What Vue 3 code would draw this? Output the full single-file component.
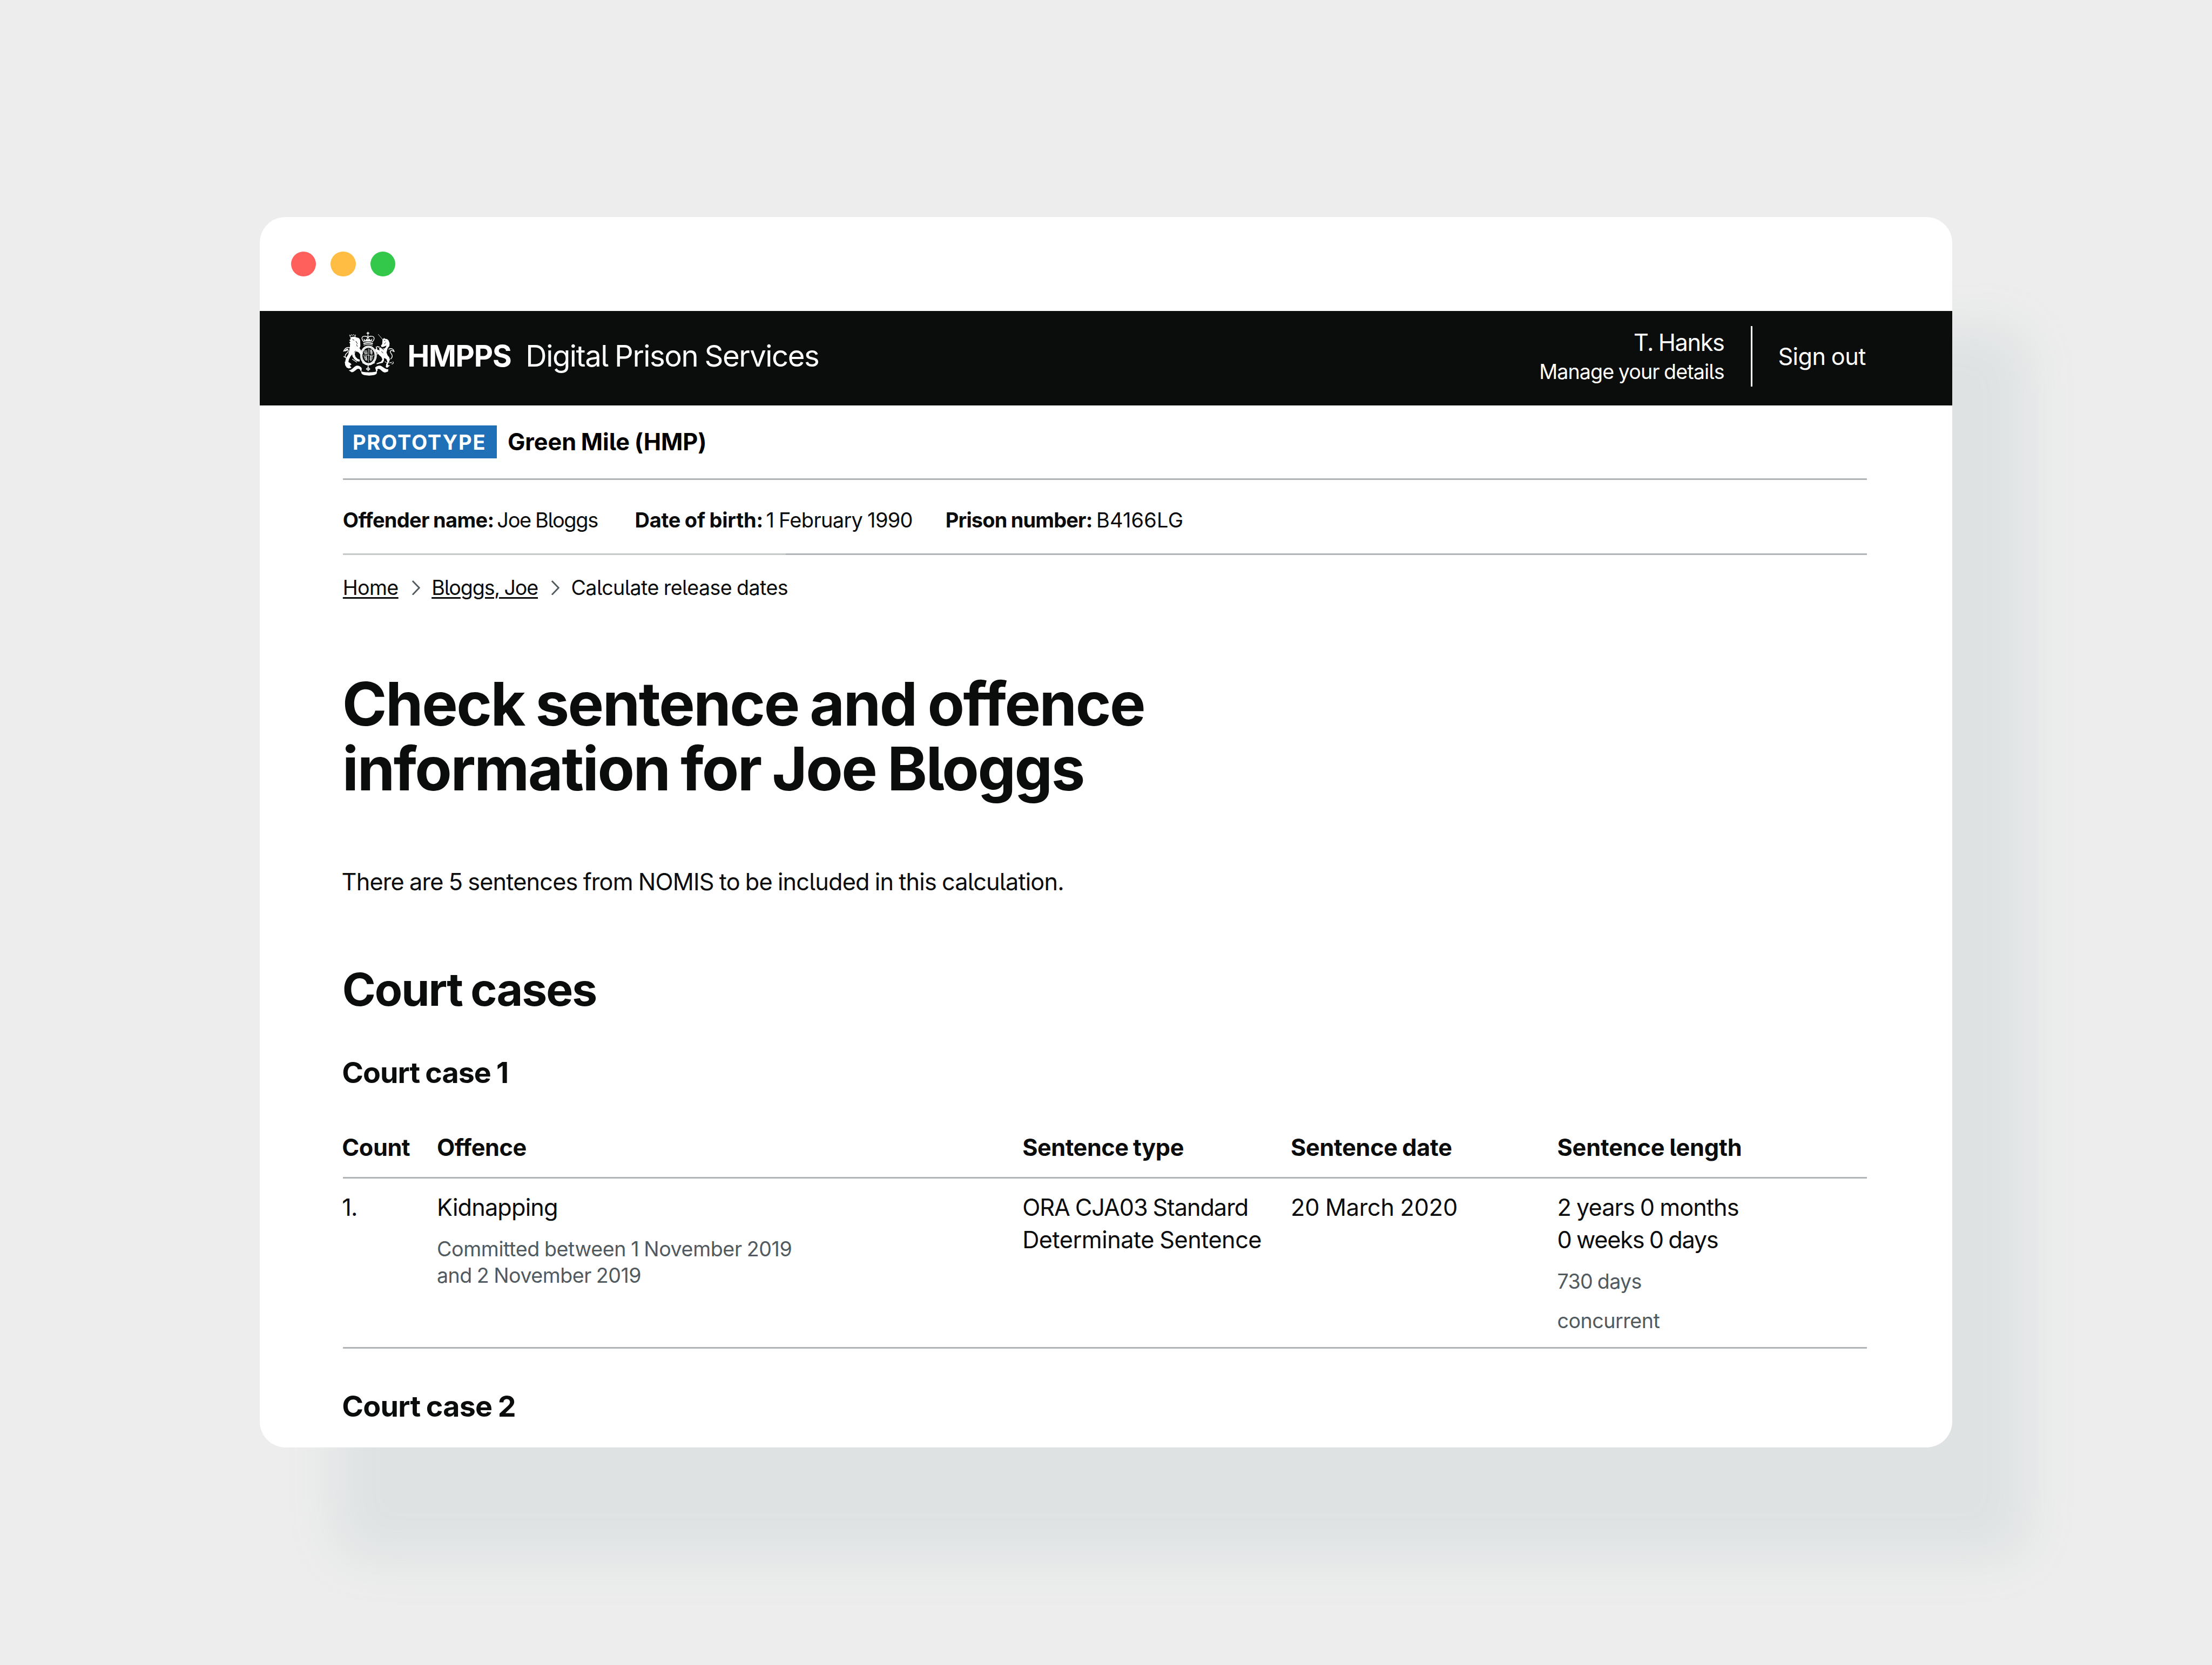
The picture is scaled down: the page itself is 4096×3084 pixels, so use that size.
<script setup>
const columns = [
  { label: 'Count', cls: 'th-count' },
  { label: 'Offence', cls: 'th-offence' },
  { label: 'Sentence type', cls: 'th-type' },
  { label: 'Sentence date', cls: 'th-date' },
  { label: 'Sentence length', cls: 'th-length' },
]
</script>

<template>
  <div class="stage">
    <div class="window">
      <div class="titlebar">
        <span class="light red"></span>
        <span class="light amber"></span>
        <span class="light green"></span>
      </div>

      <header class="header">
        <svg class="crest" viewBox="75 70 310 265" fill="none" stroke-linecap="round" stroke-linejoin="round">
          <!-- crown -->
          <g stroke="#fff">
            <path d="M224 77v14M218 83h12" stroke-width="5" />
            <path d="M224 96v30" stroke-width="5" stroke-dasharray="5 4" />
            <path d="M201 134C184 118 186 102 202 101c12-1 20 5 22 12 2-7 10-13 22-12 17 1 19 17 3 33" stroke-width="4.5" />
            <path d="M203 130l-3-14 10 11 6-12 8 11 8-11 7 12 9-11-3 14z" fill="#fff" stroke-width="2" />
            <path d="M200 143q25-8 50 0" stroke-width="7" />
            <path d="M200 152q25-7 50 0" stroke-width="4" />
          </g>
          <!-- garter and shield -->
          <ellipse cx="227" cy="213" rx="42" ry="51" stroke="#fff" stroke-width="13" />
          <ellipse cx="227" cy="213" rx="42" ry="51" stroke="#0b0c0c" stroke-width="1.2" stroke-dasharray="3 5" />
          <g stroke="#fff" stroke-width="4">
            <path d="M227 174v78M196 212h62" stroke-width="2.5" />
            <path d="M203 187h17M201 195h19M205 203h15M234 181l12 4M235 190l17 2M235 199h18M244 179l2 27" stroke-dasharray="6 3" />
            <path d="M201 220l15 3M203 228l15 2M207 237l13 2M214 216v24M236 219h16M235 228h17M235 237h13M241 217v28" stroke-dasharray="7 3" />
          </g>
          <!-- lion -->
          <g fill="#fff">
            <path d="M121 121l2-13 8-3 16-2 8 4 15 4c8 5 10 14 9 22l1 25-5 13 5 7 8 13 7 12-8 7-8-3-9-12-12-5-8 2-3 14 5 15 12 12 13 5-2 11-16-3-14-11-11-16-2-12-10 12-9 18-3 14 13 8 5 6-11 9-15-5-11-10 2-19 5-15 11-18 6-25 4-21 1-16-5-9 7-4-7-10z" />
            <path d="M118 94l5 4 5-7 6 6 6-7 5 7 7-4-4 15h-25z" fill="none" stroke="#fff" stroke-width="3" />
            <path d="M119 168c-14-5-28 2-37 20 10-4 17-10 24-7 6 3 3 12-5 18-8 7-14 15-7 27l11 6" fill="none" stroke="#fff" stroke-width="4.5" />
            <path d="M86 187l10-11 11-4 3 5-14 12z" />
            <path d="M83 219l7 4M91 251l2 15M134 235l24 17" fill="none" stroke="#fff" stroke-width="4" />
          </g>
          <path d="M135 120l8 4M154 130l8 14M158 150l4 10M152 186l-7 8" stroke="#0b0c0c" stroke-width="3" />
          <!-- unicorn -->
          <g fill="#fff">
            <path d="M284 90l27 31" stroke="#fff" stroke-width="2.6" />
            <path d="M309 119l10-8 4 5 12 1 9 8 6 16-1 17-10 12-4 14-3 12 7 17 8 9 5 14-6 17-7 12 8 11-11 9-8-4 2-17 7-15-6-15-13-7-1 16-7 13-14 3-21 5-1-5 27-10 7-14-6-13-12-10-10-12-8-8-6-14 5-6 9 7 13 4-5-10 7-8 12 7 13 0 8-7 4-10-9 4-12 5-9-1-2-8 7-9z" />
            <path d="M346 176c17-7 27 0 31 15-9-7-16-10-22-4-4 6 3 13 8 20 6 10 0 20-6 26" fill="none" stroke="#fff" stroke-width="4.5" />
            <path d="M290 164l-12-3M289 197l-12 8M272 163l4 12" fill="none" stroke="#fff" stroke-width="5" />
            <path d="M323 249l8 5M350 256l12-3M362 262c10 2 14-8 7-12M337 269l14 3" fill="none" stroke="#fff" stroke-width="3.5" />
          </g>
          <path d="M318 124l6 3M327 138l-7 8M304 171l13 9M303 190l9 8" stroke="#0b0c0c" stroke-width="3" />
          <!-- motto ribbon -->
          <g fill="#fff">
            <path d="M98 257l-7 12 9 14 12 6 16-4-7-10zM112 300l17 11c15-1 22-13 33-19 7-4 13-1 18 6l6-14c-9-9-18-14-30-11-15 5-24 25-44 27z" />
            <path d="M183 304c10 10 84 10 94 0l-2 15c-10 15-78 15-88 0z" />
            <path d="M341 307l-18 5c-15-1-20-13-31-19-8-4-13-1-18 6l-8-16c9-8 20-13 32-10 15 5 25 22 45 20z" />
            <path d="M178 283l10 4-2 18-7-4zM267 285l11-3 2 20-8 5z" />
          </g>
          <path d="M193 256l34 12 36-12M225 270v32M215 292q10-14 20 0q-10 12-20 0" stroke="#fff" stroke-width="4.5" stroke-dasharray="9 3" />
        </svg>
        <strong class="org">HMPPS</strong>
        <span class="service">Digital Prison Services</span>
        <div class="account">
          <div class="user">T. Hanks</div>
          <div class="manage">Manage your details</div>
        </div>
        <div class="signout"><span>Sign out</span></div>
      </header>

      <main class="page">
        <div class="phase">
          <span class="tag">PROTOTYPE</span>
          <strong class="prison">Green Mile (HMP)</strong>
        </div>

        <div class="facts">
          <b class="f-name">Offender name:</b><span class="v-name">Joe Bloggs</span>
          <b class="f-dob">Date of birth:</b><span class="v-dob">1 February 1990</span>
          <b class="f-num">Prison number:</b><span class="v-num">B4166LG</span>
        </div>
        <div class="rule"></div>

        <nav class="crumbs">
          <a class="c-home">Home</a>
          <svg class="chev" viewBox="0 0 17 29" fill="none" stroke="#505a5f" stroke-width="3"><path d="M2 1l13 13.500L2 28" /></svg>
          <a class="c-person">Bloggs, Joe</a>
          <svg class="chev" viewBox="0 0 17 29" fill="none" stroke="#505a5f" stroke-width="3"><path d="M2 1l13 13.500L2 28" /></svg>
          <span class="c-here">Calculate release dates</span>
        </nav>

        <h1>Check sentence and offence<br />information for Joe Bloggs</h1>
        <p class="intro">There are 5 sentences from NOMIS to be included in this calculation.</p>
        <h2>Court cases</h2>
        <h3 class="case-one">Court case 1</h3>

        <div class="row head">
          <div v-for="c in columns" :key="c.label" :class="c.cls">{{ c.label }}</div>
        </div>
        <div class="row body">
          <div class="count">1.</div>
          <div>
            <div class="offence">Kidnapping</div>
            <div class="hint committed">Committed between 1 November 2019<br /><span class="until">and 2 November 2019</span></div>
          </div>
          <div>
            <div class="ora">ORA CJA03 Standard</div>
            <div class="det">Determinate Sentence</div>
          </div>
          <div class="date">20 March 2020</div>
          <div>
            <div class="years">2 years 0 months</div>
            <div class="weeks">0 weeks 0 days</div>
            <div class="hint days">730 days</div>
            <div class="hint concurrent">concurrent</div>
          </div>
        </div>

        <h3 class="case-two">Court case 2</h3>
      </main>
    </div>
  </div>
</template>

<style>
html {
  font-size: calc(100vw / 429.6);
}
body {
  margin: 0;
  background: #ededed;
}
</style>

<style scoped>
.stage {
  box-sizing: border-box;
  width: 100vw;
  height: 100vh;
  overflow: hidden;
  padding: 42.2rem 0 0 50.5rem;
  background: #ededed;
  font-family: Inter, "Liberation Sans", sans-serif;
  font-feature-settings: "cv05";
  white-space: nowrap;
  color: #0b0c0c;
}
.stage * {
  word-spacing: -0.03em;
}
.window {
  width: 328.7rem;
  height: 239rem;
  overflow: hidden;
  border-radius: 5rem;
  background: #fff;
  box-shadow: 14.6rem 21.4rem 10rem #dee2e3;
}

/* title bar */
.titlebar {
  display: flex;
  align-items: center;
  gap: 2.85rem;
  box-sizing: border-box;
  height: 18.2rem;
  padding: 0 0 0.1rem 6.02rem;
}
.light {
  width: 4.85rem;
  height: 4.85rem;
  border-radius: 50%;
}
.red { background: #ff605c; }
.amber { background: #ffbd44; }
.green { background: #34c84a; }

/* header */
.header {
  display: flex;
  box-sizing: border-box;
  height: 18.4rem;
  padding: 0 16.6rem 0 16rem;
  background: #0b0c0c;
  color: #fff;
}
.crest {
  width: 10.33rem;
  height: 8.83rem;
  margin-top: 3.93rem;
}
.org {
  width: 22.96rem;
  margin-left: 2.3rem;
  font-size: 5.72rem;
  font-weight: 700;
  line-height: 17.5rem;
  letter-spacing: -0.0214em;
}
.service {
  font-size: 5.72rem;
  line-height: 17.5rem;
  letter-spacing: -0.0272em;
}
.account {
  margin-left: auto;
  text-align: right;
}
.user {
  margin-top: 3.2rem;
  font-size: 4.54rem;
  line-height: 6rem;
  letter-spacing: -0.0309em;
}
.manage {
  font-size: 3.95rem;
  line-height: 5.2rem;
  letter-spacing: -0.0245em;
}
.signout {
  display: flex;
  align-items: center;
  box-sizing: border-box;
  width: 22.55rem;
  height: 11.7rem;
  margin: 3rem 0 0 5.2rem;
  padding-left: 4.95rem;
  border-left: 0.32rem solid #fff;
  font-size: 4.54rem;
  letter-spacing: -0.0128em;
}

/* page */
.page {
  padding: 0 16.6rem 0 16.08rem;
}
.phase {
  display: flex;
  box-sizing: border-box;
  height: 14.45rem;
  padding-top: 3.85rem;
  border-bottom: 0.32rem solid #b1b4b6;
}
.tag {
  box-sizing: border-box;
  width: 29.92rem;
  height: 6.42rem;
  padding-left: 1.9rem;
  background: #2070b8;
  color: #fff;
  font-size: 3.99rem;
  font-weight: 700;
  line-height: 6.7rem;
  letter-spacing: 0.0472em;
}
.prison {
  margin-left: 2.08rem;
  color: #000;
  font-size: 4.54rem;
  font-weight: 700;
  line-height: 6.3rem;
  letter-spacing: -0.0019em;
}
.facts {
  display: grid;
  grid-template-columns: 29.95rem 26.76rem 25.49rem 34.84rem 29.29rem auto;
  height: 14.25rem;
  font-size: 3.99rem;
  line-height: 15.6rem;
}
.facts b { font-weight: 700; }
.f-name { letter-spacing: -0.0182em; }
.v-name { letter-spacing: -0.0369em; }
.f-dob { letter-spacing: -0.0065em; }
.v-dob { letter-spacing: -0.0187em; }
.f-num { letter-spacing: -0.0223em; }
.v-num { letter-spacing: 0.0042em; }
.rule {
  height: 0.32rem;
  background: linear-gradient(90deg, #c6c9ca 29.06%, #b1b4b6 0);
}
.crumbs {
  display: flex;
  align-items: center;
  height: 12.7rem;
  font-size: 3.95rem;
  line-height: 5rem;
}
.crumbs a {
  text-decoration: underline;
  text-decoration-thickness: 0.3rem;
  text-underline-offset: 0.11em;
}
.chev {
  width: 1.7rem;
  height: 2.9rem;
  margin: 0 2.25rem 0 2.5rem;
}
.c-home { letter-spacing: -0.0175em; }
.c-person { letter-spacing: -0.0304em; }
.c-here { letter-spacing: -0.0157em; }

h1, h2, h3, p { margin: 0; }
h1 {
  margin: 10rem 0 0 -0.1rem;
  font-size: 11.73rem;
  font-weight: 700;
  line-height: 12.5rem;
  letter-spacing: -0.0225em;
}
.intro {
  margin: 12.86rem 0 0 -0.23rem;
  font-size: 4.54rem;
  line-height: 6rem;
  letter-spacing: -0.0192em;
}
h2 {
  margin: 12.85rem 0 0 -0.12rem;
  font-size: 8.8rem;
  font-weight: 700;
  line-height: 10rem;
  letter-spacing: -0.0238em;
}
h3 {
  margin-left: -0.16rem;
  font-size: 5.64rem;
  font-weight: 700;
  line-height: 7rem;
}
.case-one {
  margin-top: 7.7rem;
  letter-spacing: -0.0185em;
}
.case-two {
  margin-top: 7.75rem;
  letter-spacing: -0.0137em;
}

/* table */
.row {
  display: grid;
  grid-template-columns: 18.27rem 113.71rem 52.12rem 51.75rem 1fr;
  box-sizing: border-box;
  border-bottom: 0.32rem solid #b1b4b6;
  font-size: 4.54rem;
  line-height: 6.28rem;
}
.row > :first-child { margin-left: -0.16rem; }
.head {
  height: 10.1rem;
  margin-top: 6.98rem;
  padding-top: 0.92rem;
  font-weight: 700;
}
.th-count { letter-spacing: -0.0105em; }
.th-offence { letter-spacing: -0.0104em; }
.th-type { letter-spacing: -0.0115em; }
.th-date { letter-spacing: -0.0078em; }
.th-length { letter-spacing: -0.0043em; }
.body {
  height: 33rem;
  padding-top: 2.48rem;
}
.count { letter-spacing: -0.02em; }
.offence { letter-spacing: -0.0194em; }
.ora { letter-spacing: -0.024em; }
.det { letter-spacing: -0.0122em; }
.date { letter-spacing: -0.0056em; }
.years { letter-spacing: -0.0211em; }
.weeks { letter-spacing: -0.0301em; }
.hint {
  color: #505a5f;
  font-size: 3.95rem;
  line-height: 5.1rem;
}
.committed {
  margin-top: 2.45rem;
  letter-spacing: -0.0109em;
}
.until { letter-spacing: -0.0138em; }
.days {
  margin-top: 2.4rem;
  letter-spacing: -0.0184em;
}
.concurrent {
  margin-top: 2.54rem;
  letter-spacing: -0.0138em;
}
</style>
